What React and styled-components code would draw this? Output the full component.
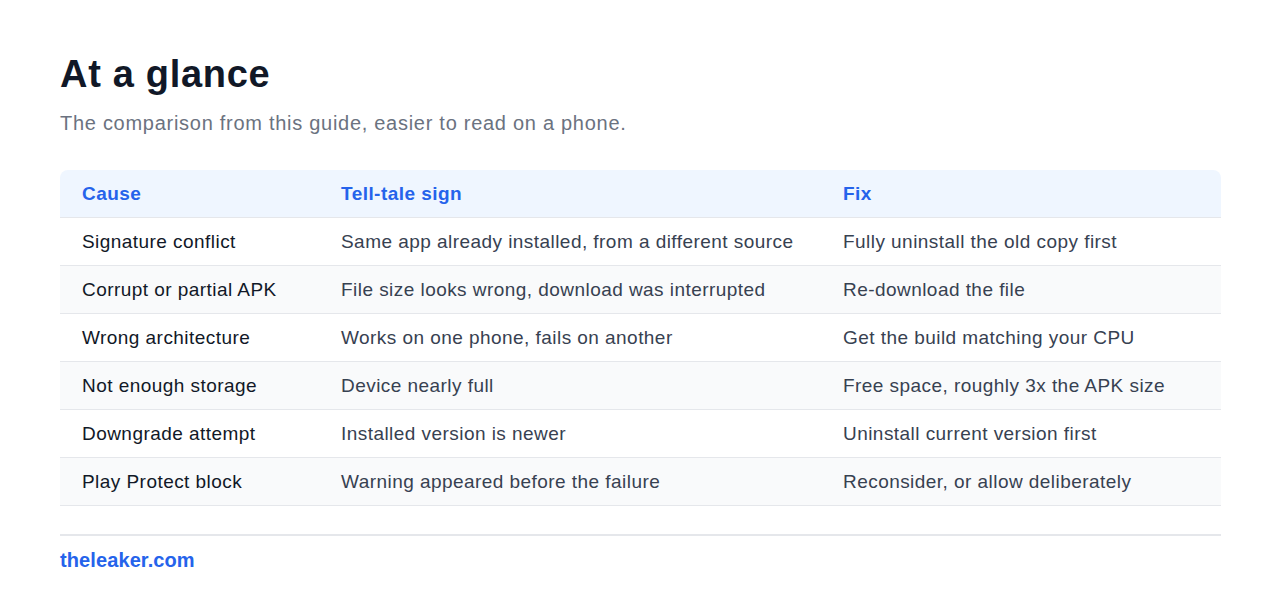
import React from 'react';
import styled, { createGlobalStyle } from 'styled-components';

const GlobalStyle = createGlobalStyle`
    body {
        margin: 0;
        background: #ffffff;
        font-family: "Liberation Sans", Arial, sans-serif;
    }
`;

const Page = styled.div`
    padding: 48px 59px 0 60px;
`;

const Title = styled.h1`
    margin: 0;
    font-size: 38px;
    line-height: 52px;
    font-weight: 700;
    letter-spacing: 0.7px;
    color: #111827;
`;

const Subtitle = styled.p`
    margin: 9px 0 0;
    font-size: 20px;
    line-height: 29px;
    letter-spacing: 0.72px;
    color: #6b7280;
`;

const Table = styled.table`
    margin-top: 32px;
    width: 100%;
    border-collapse: separate;
    border-spacing: 0;
    table-layout: fixed;
    font-size: 19px;
    letter-spacing: 0.45px;
`;

const HeadCell = styled.th`
    text-align: left;
    height: 48px;
    padding: 0 22px;
    background: #eff6ff;
    color: #2563eb;
    font-weight: 700;
    border-bottom: 1px solid #e5e7eb;
    box-sizing: border-box;

    &:first-child { border-top-left-radius: 8px; }
    &:last-child { border-top-right-radius: 8px; }
`;

const Row = styled.tr`
    background: ${p => (p.$alt ? '#f9fafb' : '#ffffff')};
`;

const Cell = styled.td`
    height: 48px;
    padding: 0 22px;
    border-bottom: 1px solid #e5e7eb;
    color: ${p => (p.$main ? '#111827' : '#374151')};
    box-sizing: border-box;
`;

const Footer = styled.div`
    margin-top: 28px;
    border-top: 2px solid #e5e7eb;
    padding-top: 13px;
`;

const Brand = styled.span`
    font-size: 20px;
    font-weight: 700;
    letter-spacing: 0.1px;
    color: #2563eb;
`;

const rows = [
    ['Signature conflict', 'Same app already installed, from a different source', 'Fully uninstall the old copy first'],
    ['Corrupt or partial APK', 'File size looks wrong, download was interrupted', 'Re-download the file'],
    ['Wrong architecture', 'Works on one phone, fails on another', 'Get the build matching your CPU'],
    ['Not enough storage', 'Device nearly full', 'Free space, roughly 3x the APK size'],
    ['Downgrade attempt', 'Installed version is newer', 'Uninstall current version first'],
    ['Play Protect block', 'Warning appeared before the failure', 'Reconsider, or allow deliberately'],
];

export default function App() {
    return (
        <Page>
            <GlobalStyle />
            <Title>At a glance</Title>
            <Subtitle>The comparison from this guide, easier to read on a phone.</Subtitle>
            <Table>
                <colgroup>
                    <col style={{ width: 259 }} />
                    <col style={{ width: 502 }} />
                    <col />
                </colgroup>
                <thead>
                    <tr>
                        <HeadCell>Cause</HeadCell>
                        <HeadCell>Tell-tale sign</HeadCell>
                        <HeadCell>Fix</HeadCell>
                    </tr>
                </thead>
                <tbody>
                    {rows.map((r, i) => (
                        <Row key={r[0]} $alt={i % 2 === 1}>
                            <Cell $main>{r[0]}</Cell>
                            <Cell>{r[1]}</Cell>
                            <Cell>{r[2]}</Cell>
                        </Row>
                    ))}
                </tbody>
            </Table>
            <Footer>
                <Brand>theleaker.com</Brand>
            </Footer>
        </Page>
    );
}
